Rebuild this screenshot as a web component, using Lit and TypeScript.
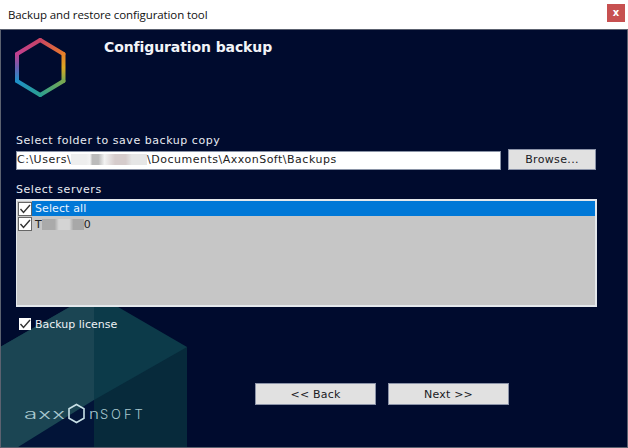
import { LitElement, html, css, svg } from "lit";
import { customElement } from "lit/decorators.js";

const check = svg`<svg class="tick" viewBox="0 0 14 14" width="14" height="14"><path d="M2.5 7 L5.5 10.5 L12 3" fill="none" stroke="#333" stroke-width="1.4"/></svg>`;

const sides: [number, number, number, number, string, string, string?][] = [
  [27.2, 3, 50.5, 17, "#c84464", "#e87a2a"],
  [50.5, 17, 50.5, 44, "#e8802a", "#7aa850", "#dca822"],
  [50.5, 44, 27.2, 58, "#7aa850", "#2ca090"],
  [27.2, 58, 4, 44, "#2ca090", "#1e90c8"],
  [4, 44, 4, 17, "#1e90c8", "#c04090", "#6a60b0"],
  [4, 17, 27.2, 3, "#c04090", "#c84464"],
];

@customElement("app-root")
export class AppRoot extends LitElement {
  static styles = css`
    :host { display: block; width: 628px; height: 448px; overflow: hidden; font-family: "DejaVu Sans", Verdana, sans-serif; font-size: 11px; letter-spacing: 0.3px; }
    .window { width: 628px; height: 448px; display: flex; flex-direction: column; box-sizing: border-box; background: #fff; }
    .titlebar { height: 30px; flex: none; display: flex; align-items: center; justify-content: space-between; box-sizing: border-box; padding: 0 3px 0 8px; background: #fff; border-bottom: 1px solid #5c6270; }
    .titletext { font-family: "Open Sans", "Noto Sans", sans-serif; font-size: 11.5px; letter-spacing: -0.1px; color: #111; margin-top: -1px; }
    .close { width: 18px; height: 18px; margin-top: -3px; background: #c75050; color: #fff; font: bold 10px "DejaVu Sans", sans-serif; letter-spacing: 0; display: flex; align-items: center; justify-content: center; padding-bottom: 2px; box-sizing: border-box; }
    .body { position: relative; flex: 1; min-height: 0; background: #000b2e; border: solid #5c6270; border-width: 0 1px 1px 1px; box-sizing: border-box; overflow: hidden; display: flex; flex-direction: column; padding: 0 31px 0 15px; color: #eef; }
    .bgshape { position: absolute; left: -1px; top: 259px; }
    .content { position: relative; display: flex; flex-direction: column; flex: 1; }
    .header { height: 102px; display: flex; flex: none; }
    .logo { width: 88px; flex: none; padding-top: 7px; }
    .logo svg { margin-left: -3px; display: block; }
    .heading { font-size: 14px; font-weight: bold; color: #f2f4f8; letter-spacing: -0.1px; margin-top: 8px; line-height: 18px; }
    .label { line-height: 14px; color: #e8ecf2; letter-spacing: 0.55px; }
    .folderlabel { margin-top: 2px; }
    .row { display: flex; gap: 7px; margin-top: 3px; height: 19px; align-items: center; }
    .input { flex: none; width: 485px; height: 19px; background: #fff; border: 1px solid #8a93a6; box-sizing: border-box; color: #222; display: flex; align-items: center; padding-bottom: 2px; white-space: nowrap; overflow: hidden; letter-spacing: 0.5px; }
    .blur { display: inline-flex; height: 11px; vertical-align: middle; }
    .blur i { display: block; height: 100%; }
    .btn { background: #e1e1e1; border: 1px solid #8b93a8; box-sizing: border-box; color: #1a1a24; display: flex; align-items: center; justify-content: center; letter-spacing: 0.2px; }
    .browse { width: 88px; height: 21px; margin-top: -2px; letter-spacing: 0.35px; }
    .serverslabel { margin-top: 13px; }
    .list { margin-top: 2px; height: 108px; width: 581px; background: #c6c6c6; border: solid #e4e8ec; border-width: 2px 2px 2px 1px; box-sizing: border-box; color: #fff; }
    .item { height: 16px; display: flex; align-items: center; }
    .item.sel { height: 15px; }
    .item .text { color: #222; display: flex; align-items: center; padding-left: 3px; letter-spacing: 0.1px; }
    .item.sel .text { background: #0078d7; color: #e8f4ff; flex: 1; height: 15px; line-height: 15px; display: block; }
    .cb { width: 14px; height: 14px; flex: none; background: #fff; border: 1px solid #666; box-sizing: border-box; margin-left: 1px; display: flex; align-items: center; justify-content: center; }
    .cb .tick { flex: none; }
    .license { display: flex; align-items: center; gap: 4px; margin-top: 9px; margin-left: 3px; height: 16px; color: #eef2f6; letter-spacing: 0; }
    .license .cb { margin-left: 0; border: none; width: 12px; height: 12px; }
    .footer { display: flex; gap: 12px; margin-top: 51px; margin-left: 239px; }
    .footer .btn { width: 121px; height: 22px; flex: none; }
    .brand { position: absolute; left: 23px; top: 372px; height: 24px; display: flex; align-items: center; font-family: "Inter", "Liberation Sans", sans-serif; font-weight: 400; font-size: 13px; line-height: 24px; color: #a9c8cf; letter-spacing: 0; }
    .axx { display: inline-block; width: 42px; letter-spacing: 0.6px; transform: scaleX(1.85); transform-origin: left center; font-weight: 300; }
    .brand svg { display: block; margin-left: 1px; flex: none; }
    .n { display: inline-block; width: 11px; margin-left: 3px; transform: scaleX(1.3); transform-origin: left center; font-weight: 300; }
    .soft { letter-spacing: 2.9px; font-weight: 300; }
  `;

  render() {
    return html`
      <div class="window">
        <div class="titlebar">
          <span class="titletext">Backup and restore configuration tool</span>
          <span class="close">x</span>
        </div>
        <div class="body">
          <svg class="bgshape" width="190" height="160" viewBox="0 0 190 160">
            <polygon points="0,58 94,4 187,58 187,160 0,160" fill="#0c3a49"/>
            <polygon points="0,58 94,4 94,111 15,160 0,160" fill="#1b4553"/>
            <polygon points="94,111 187,58 187,160 94,160" fill="#072a3b"/>
            <polygon points="15,160 94,111 94,160" fill="#021438"/>
          </svg>
          <div class="brand">
            <span class="axx">axx</span>
            <svg width="19" height="22" viewBox="0 0 19 22"><polygon points="9.5,1.5 17,5.8 17,15.2 9.5,19.5 2,15.2 2,5.8" fill="none" stroke="#c8e0e6" stroke-width="1.6"/></svg>
            <span class="n">n</span><span class="soft">SOFT</span>
          </div>
          <div class="content">
            <div class="header">
              <div class="logo">
                <svg width="56" height="62" viewBox="0 0 56 62">
                  <defs>
                    ${sides.map(([x1, y1, x2, y2, c1, c2, mid], i) => svg`
                      <linearGradient id="s${i}" gradientUnits="userSpaceOnUse" x1=${x1} y1=${y1} x2=${x2} y2=${y2}>
                        <stop offset="0" stop-color=${c1}/>
                        ${mid ? svg`<stop offset="0.5" stop-color=${mid}/>` : ""}
                        <stop offset="1" stop-color=${c2}/>
                      </linearGradient>`)}
                  </defs>
                  <g stroke-width="4" fill="none" stroke-linecap="round">
                    ${sides.map(([x1, y1, x2, y2], i) => svg`<line x1=${x1} y1=${y1} x2=${x2} y2=${y2} stroke="url(#s${i})"/>`)}
                  </g>
                </svg>
              </div>
              <div class="heading">Configuration backup</div>
            </div>
            <div class="label folderlabel">Select folder to save backup copy</div>
            <div class="row">
              <div class="input">C:\\Users\\<span class="blur"><i style="width:76px;background:linear-gradient(90deg,#eee 0 20%,#f4f4f4 25%,#bbb 28% 36%,#f2f2f2 44%,#d6cccc 58% 72%,#e6e6e6 80% 100%)"></i></span>\\Documents\\AxxonSoft\\Backups</div>
              <div class="btn browse">Browse...</div>
            </div>
            <div class="label serverslabel">Select servers</div>
            <div class="list">
              <div class="item sel"><span class="cb">${check}</span><span class="text">Select all</span></div>
              <div class="item"><span class="cb">${check}</span><span class="text">T<span class="blur"><i style="width:42px;background:linear-gradient(90deg,#aaa 0 30%,#d4d4d4 40% 65%,#a8a8a8 75% 100%)"></i></span>0</span></div>
            </div>
            <div class="license"><span class="cb">${check}</span><span>Backup license</span></div>
            <div class="footer">
              <div class="btn">&lt;&lt; Back</div>
              <div class="btn">Next &gt;&gt;</div>
            </div>
          </div>
        </div>
      </div>
    `;
  }
}
